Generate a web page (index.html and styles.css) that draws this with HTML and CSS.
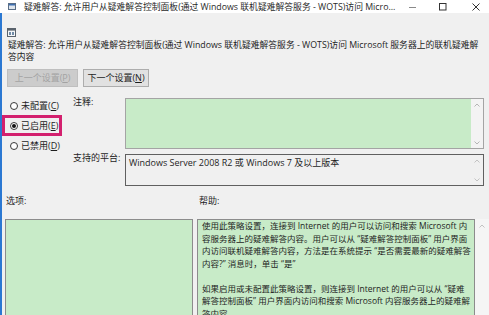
FILE: index.html
```html
<!DOCTYPE html>
<html lang="zh-CN">
<head>
<meta charset="utf-8">
<title>疑难解答</title>
<link rel="stylesheet" href="styles.css">
</head>
<body>
<div class="titlebar">
  <svg class="title-icon" viewBox="0 0 8 7" width="8" height="7"><rect x="0.5" y="0.5" width="7" height="6" fill="#dfe6ee" stroke="#5a6e86"/><rect x="1" y="1" width="6" height="1.5" fill="#3f6fb0"/></svg>
  <span class="title-text">疑难解答: 允许用户从疑难解答控制面板(通过 Windows 联机疑难解答服务 - WOTS)访问 Micro...</span>
  <div class="controls">
    <div class="ctl"><svg viewBox="0 0 8 8" width="8" height="8"><line x1="0" y1="4.5" x2="7" y2="4.5" stroke="#8a8a8a" stroke-width="1"/></svg></div>
    <div class="ctl"><svg viewBox="0 0 8 8" width="8" height="8"><rect x="0.5" y="0.5" width="6.5" height="6.5" fill="none" stroke="#333" stroke-width="1"/></svg></div>
    <div class="ctl ctl-close"><svg viewBox="0 0 8 8" width="8" height="8"><path d="M0.5 0.5 L7.5 7.5 M7.5 0.5 L0.5 7.5" stroke="#333" stroke-width="1"/></svg></div>
  </div>
</div>
<div class="main">
  <div class="head">
    <svg class="policy-icon" viewBox="0 0 9 9" width="9" height="9"><rect x="0.5" y="0.5" width="8" height="8" fill="#f4f6f8" stroke="#59626c"/><rect x="1" y="1" width="7" height="1.6" fill="#59626c"/><rect x="2" y="4" width="2" height="3" fill="#6f8aa6"/><rect x="5" y="4" width="2" height="3" fill="#6f8aa6"/></svg>
    <p class="policy-name">疑难解答: 允许用户从疑难解答控制面板(通过 Windows 联机疑难解答服务 - WOTS)访问 Microsoft 服务器上的联机疑难解答内容</p>
  </div>
  <div class="nav">
    <button class="btn btn-prev" disabled>上一个设置(<u>P</u>)</button>
    <button class="btn btn-next">下一个设置(<u>N</u>)</button>
  </div>
  <div class="settings">
    <div class="radios">
      <div class="radio"><span class="circle"></span>未配置(<u>C</u>)</div>
      <div class="radio radio-on highlight"><span class="circle"></span>已启用(<u>E</u>)</div>
      <div class="radio"><span class="circle"></span>已禁用(<u>D</u>)</div>
    </div>
    <div class="field-label">注释:</div>
    <div class="box comment">
      <div class="fill"></div>
      <div class="vscroll">
        <svg viewBox="0 0 6 4" width="6" height="4"><polyline points="0.5,3.5 3,1 5.5,3.5" fill="none" stroke="#b5b5b5"/></svg>
        <svg viewBox="0 0 6 4" width="6" height="4"><polyline points="0.5,0.5 3,3 5.5,0.5" fill="none" stroke="#b5b5b5"/></svg>
      </div>
    </div>
    <div class="field-label">支持的平台:</div>
    <div class="box platform">
      <div class="fill">Windows Server 2008 R2 或 Windows 7 及以上版本</div>
      <div class="vscroll">
        <svg viewBox="0 0 6 4" width="6" height="4"><polyline points="0.5,3.5 3,1 5.5,3.5" fill="none" stroke="#c2c2c2"/></svg>
        <svg viewBox="0 0 6 4" width="6" height="4"><polyline points="0.5,0.5 3,3 5.5,0.5" fill="none" stroke="#c2c2c2"/></svg>
      </div>
    </div>
  </div>
  <div class="lower">
    <div class="sec-label sec-options">选项:</div>
    <div class="sec-label sec-help">帮助:</div>
    <div></div>
    <div class="panel options"></div>
    <div class="panel help">
      <p>使用此策略设置，连接到 Internet 的用户可以访问和搜索 Microsoft 内容服务器上的疑难解答内容。用户可以从 “疑难解答控制面板” 用户界面内访问联机疑难解答内容，方法是在系统提示 “是否需要最新的疑难解答内容?” 消息时，单击 “是”</p>
      <p>如果启用或未配置此策略设置，则连接到 Internet 的用户可以从 “疑难解答控制面板” 用户界面内访问和搜索 Microsoft 内容服务器上的疑难解答内容。</p>
    </div>
    <div class="help-scroll">
      <svg viewBox="0 0 6 4" width="6" height="4"><polyline points="0.5,3.5 3,1 5.5,3.5" fill="none" stroke="#c2c2c2"/></svg>
    </div>
  </div>
</div>
</body>
</html>
```

FILE: styles.css
```css
* { box-sizing: border-box; }

html, body {
  margin: 0;
  padding: 0;
  width: 489px;
  height: 315px;
  overflow: hidden;
}

body {
  background: #f0f0f0;
  font-family: "Open Sans", "Noto Sans CJK SC", sans-serif;
  font-size: 9px;
  color: #1e1e1e;
}

/* Title bar */
.titlebar {
  height: 13px;
  background: #ffffff;
  display: flex;
  align-items: center;
  overflow: hidden;
}
.title-icon { flex: none; margin-left: 8px; }
.title-text {
  margin-left: 8px;
  font-size: 8.8px;
  line-height: 12px;
  white-space: nowrap;
  color: #2a2a2a;
}
.controls {
  margin-left: auto;
  margin-right: -5px;
  display: flex;
  height: 13px;
  flex: none;
}
.ctl {
  width: 30px;
  display: flex;
  align-items: center;
  justify-content: center;
}
.ctl-close { width: 36px; }

/* Main area */
.main {
  border-left: 2px solid #2b78d2;
  height: 302px;
  overflow: hidden;
}

.head { padding-left: 5px; padding-top: 15px; }
.policy-icon { display: block; }
.policy-name {
  margin: 2px 4px 0 1px;
  font-size: 8.8px;
  line-height: 12px;
}

.nav {
  display: flex;
  gap: 5px;
  margin-top: 6px;
  padding-left: 5px;
}
.btn {
  height: 18px;
  padding: 0;
  font: inherit;
  line-height: 16px;
  border: 1px solid #adadad;
  background: #e1e1e1;
  color: #1e1e1e;
}
.btn-prev {
  width: 71px;
  background: #cccccc;
  border-color: #bfbfbf;
  color: #a3a3a3;
}
.btn-next { width: 66px; }

/* Settings grid */
.settings {
  display: grid;
  grid-template-columns: 60px 63px 359px;
  grid-template-rows: 53px 34px;
  row-gap: 3px;
  margin-top: 9px;
}
.radios {
  grid-row: 1 / span 2;
  grid-column: 1;
}
.radio {
  height: 20px;
  display: flex;
  align-items: center;
  padding-left: 8px;
  line-height: 12px;
}
.circle {
  width: 8px;
  height: 8px;
  border-radius: 50%;
  border: 1px solid #3a3a3a;
  background: #ffffff;
  margin-right: 3px;
  flex: none;
  display: flex;
  align-items: center;
  justify-content: center;
}
.radio-on .circle::after {
  content: "";
  width: 4px;
  height: 4px;
  border-radius: 50%;
  background: #111;
}
.highlight {
  outline: 3px solid #d3206e;
  outline-offset: -3px;
  height: 21px;
  margin-top: -1px;
}

.field-label {
  padding-left: 11px;
  line-height: 12px;
}
.box {
  margin-top: 2px;
  display: flex;
  border: 1px solid #a4a4a4;
}
.comment { height: 51px; }
.comment .fill { flex: 1; background: #c8ebc8; }
.vscroll {
  width: 12px;
  flex: none;
  background: #f3f3f3;
  display: flex;
  flex-direction: column;
  justify-content: space-between;
  align-items: center;
  padding: 4px 0 3px;
}
.platform {
  height: 32px;
  border-color: #606060;
  background: #f0f0f0;
}
.platform .fill {
  flex: 1;
  padding: 2px 3px;
  line-height: 12px;
}
.platform .vscroll { background: #f0f0f0; }

/* Lower part */
.lower {
  display: grid;
  grid-template-columns: 192px 278px 1fr;
  grid-template-rows: 12px 120px;
  row-gap: 12px;
  margin-top: 9px;
  padding-left: 3px;
}
.sec-label { line-height: 12px; }
.sec-options { padding-left: 1px; }
.sec-help { padding-left: 2px; }
.panel {
  border: 1px solid #8c8c8c;
  background: #c8ebc8;
}
.options { width: 188px; }
.help {
  padding: 0 2px 0 4px;
  font-size: 8.5px;
  line-height: 12.5px;
}
.help p { margin: 0 0 12.5px; }
.help-scroll {
  background: #f5f5f5;
  display: flex;
  justify-content: center;
  padding-top: 5px;
}
.help-scroll svg { display: block; }
```
